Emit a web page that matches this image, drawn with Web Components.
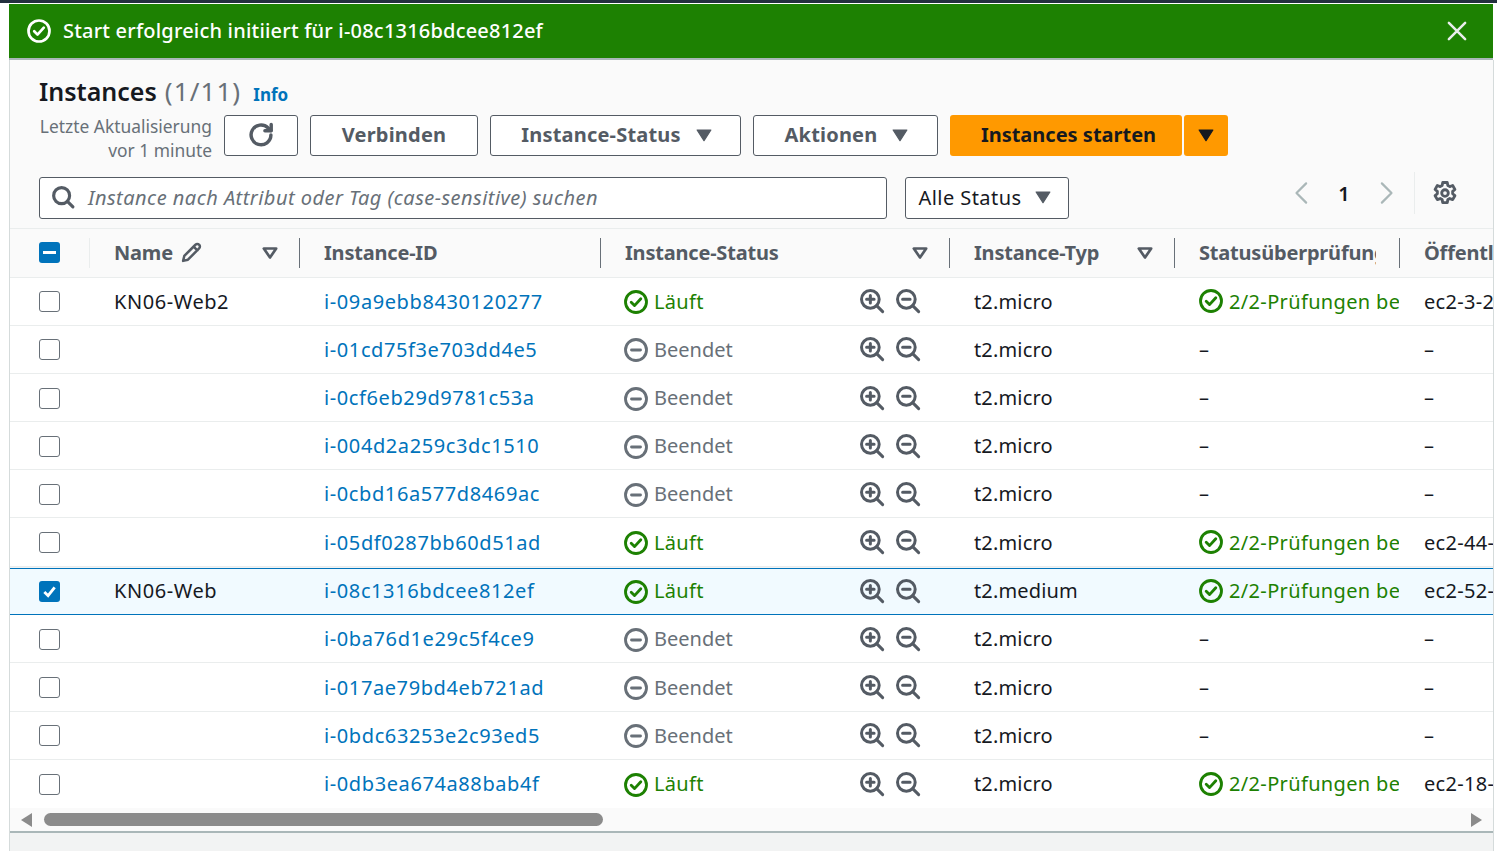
<!DOCTYPE html>
<html lang="de">
<head>
<meta charset="utf-8">
<title>Instances</title>
<style>
  html, body { margin: 0; padding: 0; background: #fff; height: 851px; overflow: hidden; }
  body { font-family: "Noto Sans", sans-serif; font-size: 20px; color: #16191f; }
</style>
</head>
<body>
<ec2-page>
  <ec2-flash slot="flash" message="Start erfolgreich initiiert für i-08c1316bdcee812ef"></ec2-flash>
  <ec2-header slot="header"></ec2-header>
  <ec2-table slot="table">
    <ec2-row name="KN06-Web2" iid="i-09a9ebb8430120277" state="run" type="t2.micro" dns="ec2-3-2"></ec2-row>
    <ec2-row iid="i-01cd75f3e703dd4e5" state="end" type="t2.micro"></ec2-row>
    <ec2-row iid="i-0cf6eb29d9781c53a" state="end" type="t2.micro"></ec2-row>
    <ec2-row iid="i-004d2a259c3dc1510" state="end" type="t2.micro"></ec2-row>
    <ec2-row iid="i-0cbd16a577d8469ac" state="end" type="t2.micro"></ec2-row>
    <ec2-row iid="i-05df0287bb60d51ad" state="run" type="t2.micro" dns="ec2-44-"></ec2-row>
    <ec2-row name="KN06-Web" iid="i-08c1316bdcee812ef" state="run" type="t2.medium" dns="ec2-52-" selected></ec2-row>
    <ec2-row iid="i-0ba76d1e29c5f4ce9" state="end" type="t2.micro"></ec2-row>
    <ec2-row iid="i-017ae79bd4eb721ad" state="end" type="t2.micro"></ec2-row>
    <ec2-row iid="i-0bdc63253e2c93ed5" state="end" type="t2.micro"></ec2-row>
    <ec2-row iid="i-0db3ea674a88bab4f" state="run" type="t2.micro" dns="ec2-18-"></ec2-row>
  </ec2-table>
</ec2-page>

<script>
// icons, all on a 16x16 box
const ICONS = {
  ok: '<circle cx="8" cy="8" r="7"/><path d="M4.8 8.2 7 10.4l4.2-4.6"/>',
  stop: '<circle cx="8" cy="8" r="7"/><path d="M5 8h6"/>',
  zoomin: '<circle cx="6.9" cy="6.9" r="5.9"/><path d="m11.1 11.1 4 4M6.9 4.4v5M4.4 6.9h5"/>',
  zoomout: '<circle cx="6.9" cy="6.9" r="5.9"/><path d="m11.1 11.1 4 4M4.4 6.9h5"/>',
  close: '<path d="m1.5 1.5 13 13M14.5 1.5l-13 13"/>',
  refresh: '<path d="M14.6 8a6.6 6.6 0 1 1-2-4.8l2 1.8"/><path d="M14.8 1v4.2h-4.2"/>',
  search: '<circle cx="7" cy="7" r="5.8"/><path d="m11.2 11.2 4 4"/>',
  edit: '<path d="M1.6 14.4 2.5 10.6 11 2.1a1.9 1.9 0 0 1 2.8 0 1.9 1.9 0 0 1 0 2.8L5.3 13.5zM9.6 3.5l2.9 2.9"/>',
  left: '<path d="M11 1 4 8l7 7"/>',
  right: '<path d="m5 1 7 7-7 7"/>',
  gear: '<path d="M6.5 1h3l.4 2 1.3.7 1.9-.7 1.5 2.6-1.5 1.3v1.6l1.5 1.3-1.5 2.6-1.9-.7-1.3.7-.4 2h-3l-.4-2-1.3-.7-1.9.7-1.5-2.6 1.5-1.3V6.9L1.4 5.6l1.5-2.6 1.9.7 1.3-.7z"/><circle cx="8" cy="8" r="2.2"/>',
  caret: '<path d="M2.5 4h11L8 12.5z" fill="currentColor"/>',
  sort: '<path d="M2.5 4h11L8 12z"/>'
};

class Ec2Icon extends HTMLElement {
  connectedCallback() {
    const size = this.getAttribute('size') || 24;
    const sw = this.getAttribute('sw') || 2;
    this.attachShadow({ mode: 'open' }).innerHTML = `
      <style>
        :host { display: inline-flex; flex: none; width: ${size}px; height: ${size}px; }
        svg { width: 100%; height: 100%; display: block; overflow: visible; fill: none; stroke: currentColor; stroke-width: ${sw}; stroke-linejoin: round; stroke-linecap: round; }
      </style>
      <svg viewBox="0 0 16 16">${ICONS[this.getAttribute('name')] || ''}</svg>`;
  }
}
customElements.define('ec2-icon', Ec2Icon);

class Ec2Page extends HTMLElement {
  constructor() {
    super();
    this.attachShadow({ mode: 'open' }).innerHTML = `
      <style>
        :host { display: flex; flex-direction: column; height: 851px; box-sizing: border-box; border-top: 3px solid #232f3e; padding: 1px 3px 0 9px; }
        .panel { flex: 1; display: flex; flex-direction: column; min-height: 0; border-left: 1px solid #d5dbdb; border-right: 1px solid #d5dbdb; background: #f2f3f3; }
        .flash { margin-right: 1px; }
      </style>
      <div class="flash"><slot name="flash"></slot></div>
      <div class="panel">
        <slot name="header"></slot>
        <slot name="table"></slot>
      </div>`;
  }
}
customElements.define('ec2-page', Ec2Page);

class Ec2Flash extends HTMLElement {
  connectedCallback() {
    this.attachShadow({ mode: 'open' }).innerHTML = `
      <style>
        :host { display: flex; align-items: center; height: 54px; padding: 0 26px 0 18px; gap: 12px; background: #1d8102; color: #fff; border-bottom: 2px solid #aab7b8; font-size: 20px; font-weight: 500; letter-spacing: .2px; }
        span { flex: 1; padding-bottom: 2px; }
        ec2-icon { color: #fff; }
        .x { color: #eaeded; }
      </style>
      <ec2-icon name="ok" size="24" sw="1.8"></ec2-icon>
      <span>${this.getAttribute('message')}</span>
      <ec2-icon class="x" name="close" size="20" sw="2"></ec2-icon>`;
  }
}
customElements.define('ec2-flash', Ec2Flash);

class Ec2Button extends HTMLElement {
  constructor() {
    super();
    this.attachShadow({ mode: 'open' }).innerHTML = `
      <style>
        :host { display: inline-flex; align-items: center; justify-content: center; gap: 13px; box-sizing: border-box; height: 41px; border: 1px solid #545b64; border-radius: 3px; background: #fff; color: #545b64; font-size: 20px; font-weight: 700; letter-spacing: .2px; white-space: nowrap; padding-bottom: 2px; }
        :host([primary]) { background: #ff9900; border: none; color: #16191f; letter-spacing: 0; }
        :host([plain]) { font-weight: 400; color: #16191f; letter-spacing: .45px; }
      </style>
      <slot></slot>`;
  }
}
customElements.define('ec2-button', Ec2Button);

class Ec2Header extends HTMLElement {
  constructor() {
    super();
    this.attachShadow({ mode: 'open' }).innerHTML = `
      <style>
        :host { display: block; box-sizing: border-box; height: 168px; padding: 11px 0 0 29px; background: #fafafa; }
        h1 { margin: 0 0 5px; height: 39px; font-size: 25px; line-height: 36px; font-weight: 600; color: #16191f; display: flex; align-items: center; }
        h1 small { font-size: 26px; font-weight: 400; color: #687078; margin-left: 8px; letter-spacing: 1.1px; }
        h1 a { font-size: 17px; font-weight: 700; color: #0073bb; margin-left: 12px; padding-top: 8px; }
        .tools { display: flex; gap: 12px; height: 41px; }
        .updated { width: 173px; flex: none; text-align: right; font-size: 17.4px; line-height: 24px; color: #687078; white-space: nowrap; margin-top: -1px; }
        .split { display: flex; gap: 2px; }
        .filter { display: flex; margin-top: 21px; height: 42px; }
        .search { width: 848px; box-sizing: border-box; height: 42px; display: flex; align-items: center; gap: 14px; padding: 0 0 2px 12px; border: 1px solid #545b64; border-radius: 3px; background: #fff; color: #545b64; font-style: italic; font-size: 20px; letter-spacing: .47px; }
        .search span { color: #687078; }
        .pager { display: flex; align-items: center; height: 32px; margin-left: 222px; color: #aab7b8; }
        .pager b { width: 58px; margin: 0 2px; text-align: center; color: #16191f; font-size: 20px; font-weight: 600; }
        .gear { display: flex; align-items: center; margin-left: 17px; padding-left: 18px; height: 42px; border-left: 1px solid #eaeded; color: #545b64; }
        ec2-button ec2-icon { color: inherit; }
      </style>
      <h1>Instances<small>(1/11)</small><a>Info</a></h1>
      <div class="tools">
        <div class="updated">Letzte Aktualisierung<br>vor 1 minute</div>
        <ec2-button style="width:74px"><ec2-icon name="refresh" size="24" sw="2.3"></ec2-icon></ec2-button>
        <ec2-button style="width:168px">Verbinden</ec2-button>
        <ec2-button style="width:251px;padding-left:4px">Instance-Status<ec2-icon name="caret" size="20" sw="1"></ec2-icon></ec2-button>
        <ec2-button style="width:185px;padding-left:4px">Aktionen<ec2-icon name="caret" size="20" sw="1"></ec2-icon></ec2-button>
        <div class="split">
          <ec2-button primary style="width:232px;padding-left:5px">Instances starten</ec2-button>
          <ec2-button primary style="width:44px"><ec2-icon name="caret" size="20" sw="1"></ec2-icon></ec2-button>
        </div>
      </div>
      <div class="filter">
        <div class="search"><ec2-icon name="search" size="22" sw="2.3"></ec2-icon><span>Instance nach Attribut oder Tag (case-sensitive) suchen</span></div>
        <ec2-button plain style="width:164px;height:42px;margin-left:18px;gap:11px;padding-right:3px">Alle Status<ec2-icon name="caret" size="20" sw="1" style="color:#545b64"></ec2-icon></ec2-button>
        <div class="pager">
          <ec2-icon name="left" size="22" sw="1.6"></ec2-icon>
          <b>1</b>
          <ec2-icon name="right" size="22" sw="1.6"></ec2-icon>
          <div class="gear"><ec2-icon name="gear" size="24" sw="1.9"></ec2-icon></div>
        </div>
      </div>`;
  }
}
customElements.define('ec2-header', Ec2Header);

const COLS = '79px 210px 301px 349px 225px 225px 1fr';

class Ec2Table extends HTMLElement {
  constructor() {
    super();
    this.attachShadow({ mode: 'open' }).innerHTML = `
      <style>
        :host { display: block; overflow: hidden; }
        .head { display: grid; grid-template-columns: ${COLS}; height: 49.55px; box-sizing: border-box; background: #fafafa; border-top: 1px solid #eaeded; border-bottom: 1px solid #eaeded; align-items: center; }
        .th { display: flex; align-items: center; height: 30px; padding-left: 24px; padding-right: 20px; border-left: 1px solid #687078; color: #545b64; font-size: 20px; font-weight: 700; letter-spacing: -.2px; white-space: nowrap; overflow: hidden; }
        .th span { flex: 1; overflow: hidden; }
        .th.first { border-left-color: #eaeded; }
        .th.clip { padding-right: 23px; }
        .th.last { padding-right: 0; }
        .check { display: flex; align-items: center; padding-left: 29px; }
        .box { width: 21px; height: 21px; border-radius: 3px; background: #0073bb; position: relative; }
        .box::after { content: ""; position: absolute; left: 4px; right: 4px; top: 8.5px; height: 3.5px; background: #fff; }
        .th.name span { flex: none; }
        .th.name .sp { flex: 1; }
        .th ec2-icon { color: #545b64; }
        .bar { display: flex; align-items: center; height: 23px; background: #fafafa; padding: 0 11px; gap: 12px; }
        .track { flex: 1; height: 13px; }
        .thumb { width: 559px; height: 13px; border-radius: 7px; background: #8b8b8b; }
        .arrow { width: 0; height: 0; border-top: 7px solid transparent; border-bottom: 7px solid transparent; }
        .arrow.l { border-right: 11px solid #8b8b8b; }
        .arrow.r { border-left: 11px solid #8b8b8b; }
        .foot { border-top: 2px solid #aab7b8; }
      </style>
      <div class="head">
        <div class="check"><div class="box"></div></div>
        <div class="th first name"><span>Name</span><ec2-icon name="edit" size="21" sw="1.9" style="margin-left:8px"></ec2-icon><i class="sp"></i><ec2-icon name="sort" size="18" sw="2.4"></ec2-icon></div>
        <div class="th"><span>Instance-ID</span></div>
        <div class="th"><span>Instance-Status</span><ec2-icon name="sort" size="18" sw="2.4"></ec2-icon></div>
        <div class="th"><span>Instance-Typ</span><ec2-icon name="sort" size="18" sw="2.4"></ec2-icon></div>
        <div class="th clip"><span>Statusüberprüfung</span></div>
        <div class="th last"><span>Öffentlich</span></div>
      </div>
      <slot></slot>
      <div class="bar"><div class="arrow l"></div><div class="track"><div class="thumb"></div></div><div class="arrow r"></div></div>
      <div class="foot"></div>`;
  }
}
customElements.define('ec2-table', Ec2Table);

class Ec2Row extends HTMLElement {
  connectedCallback() {
    const a = n => this.getAttribute(n) || '';
    const run = a('state') === 'run';
    const sel = this.hasAttribute('selected');
    this.attachShadow({ mode: 'open' }).innerHTML = `
      <style>
        :host { display: grid; grid-template-columns: ${COLS}; height: 48.2px; box-sizing: border-box; align-items: center; background: #fff; border-bottom: 1px solid #eaeded; font-size: 20px; white-space: nowrap; }
        :host([selected]) { background: #f1faff; border-top: 1px solid #0073bb; border-bottom: 1px solid #0073bb; margin-top: 1px; height: 47.6px; padding-bottom: 1px; }
        :host(:last-child) { border-bottom: none; }
        .check { padding: 1px 0 0 29px; display: flex; }
        .box { width: 21px; height: 21px; box-sizing: border-box; border: 1.5px solid #687078; border-radius: 3px; background: #fff; }
        .box.on { border: none; background: #0073bb; display: flex; align-items: center; justify-content: center; }
        .td { padding-left: 25px; overflow: hidden; }
        .name { letter-spacing: .55px; }
        .id { color: #0073bb; letter-spacing: .6px; }
        .type { letter-spacing: .15px; }
        .dns { letter-spacing: .3px; }
        .state { display: flex; align-items: center; gap: 6px; padding-left: 24px; color: ${run ? '#1d8102' : '#687078'}; letter-spacing: ${run ? '.3px' : '0'}; }
        .state ec2-icon.s { margin-top: 2px; }
        .state span { flex: 1; }
        .state .z { color: #545b64; margin-right: 6px; }
        .state .z + .z { margin-right: 29px; }
        .good { display: flex; align-items: center; gap: 6px; color: #1d8102; letter-spacing: .35px; }
      </style>
      <div class="check"><div class="box ${sel ? 'on' : ''}">${sel ? '<svg width="15" height="15" viewBox="0 0 16 16" fill="none" stroke="#fff" stroke-width="3"><path d="M2.5 8.5 6.5 12.5 13.5 3.5"/></svg>' : ''}</div></div>
      <div class="td name">${a('name')}</div>
      <div class="td id">${a('iid')}</div>
      <div class="td state">
        <ec2-icon class="s" name="${run ? 'ok' : 'stop'}" size="24" sw="1.9"></ec2-icon><span>${run ? 'Läuft' : 'Beendet'}</span>
        <ec2-icon class="z" name="zoomin" size="24" sw="2"></ec2-icon>
        <ec2-icon class="z" name="zoomout" size="24" sw="2"></ec2-icon>
      </div>
      <div class="td type">${a('type')}</div>
      <div class="td ${run ? 'good' : ''}">${run ? '<ec2-icon name="ok" size="24" sw="1.9"></ec2-icon><span>2/2-Prüfungen be</span>' : '–'}</div>
      <div class="td dns">${a('dns') || '–'}</div>`;
  }
}
customElements.define('ec2-row', Ec2Row);
</script>
</body>
</html>
